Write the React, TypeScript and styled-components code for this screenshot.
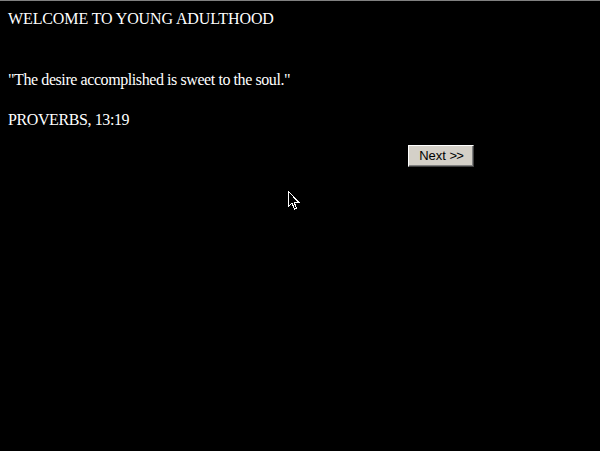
import React from "react";
import styled, { createGlobalStyle } from "styled-components";

const Global = createGlobalStyle`
  html, body { margin: 0; padding: 0; background: #000; }
  body { width: 600px; height: 451px; overflow: hidden; }
`;

const Page = styled.div`
  position: relative;
  width: 600px;
  height: 451px;
  box-sizing: border-box;
  background: #000;
  border-top: 1px solid #808080;
  padding: 9px 8px 0 8px;
  font-family: "Liberation Serif", "Times New Roman", serif;
  font-size: 16px;
  line-height: 18px;
  color: #fff;
`;

const Line = styled.div<{ $top: number; $spacing: number }>`
  margin-top: ${(p) => p.$top}px;
  letter-spacing: ${(p) => p.$spacing}px;
  white-space: nowrap;
`;

const ButtonRow = styled.div`
  display: flex;
  margin-top: 16px;
  padding-left: 400px;
`;

const Button = styled.button`
  width: 66px;
  height: 22px;
  box-sizing: border-box;
  padding: 0 0 1px 0;
  background: #d4d0c8;
  color: #000;
  font-family: "Liberation Sans", Arial, sans-serif;
  font-size: 13px;
  border: 1px solid;
  border-color: #fff #404040 #404040 #fff;
  box-shadow: inset -1px -1px 0 #808080, inset 1px 1px 0 #d4d0c8;
  cursor: default;
`;

const Arrows = styled.span`
  letter-spacing: -1px;
`;

const Cursor = styled.svg`
  position: absolute;
  left: 287px;
  top: 189px;
`;

export default function App() {
  return (
    <>
      <Global />
      <Page>
        <Line $top={0} $spacing={-0.12}>WELCOME TO YOUNG ADULTHOOD</Line>
        <Line $top={43} $spacing={-0.42}>"The desire accomplished is sweet to the soul."</Line>
        <Line $top={22} $spacing={-0.4}>PROVERBS, 13:19</Line>
        <ButtonRow>
          <Button>
            Next <Arrows>&gt;&gt;</Arrows>
          </Button>
        </ButtonRow>
        <Cursor width="13" height="21" viewBox="0 0 13 21">
          <path
            d="M1.5 1.5 L1.5 16.5 L5 13 L7.5 19 L9.5 18 L7 12 L11.5 12 Z"
            fill="#000"
            stroke="#fff"
            strokeWidth="1"
            shapeRendering="crispEdges"
          />
        </Cursor>
      </Page>
    </>
  );
}
